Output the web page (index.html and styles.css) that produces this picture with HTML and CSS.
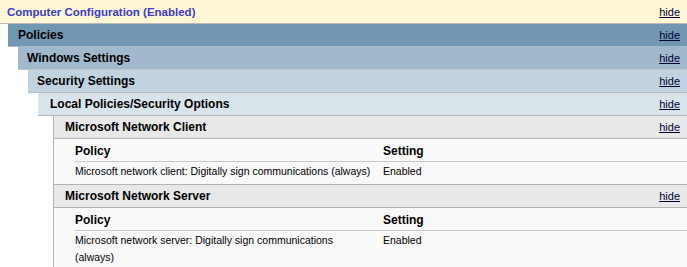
FILE: index.html
```html
<!DOCTYPE html>
<html>
<head>
<meta charset="utf-8">
<title>Group Policy Report</title>
<link rel="stylesheet" href="styles.css">
</head>
<body>
<div class="he0">
	<div class="head"><span class="title">Computer Configuration (Enabled)</span><a href="#">hide</a></div>
	<div class="body b0">
		<div class="head he1"><span class="title">Policies</span><a href="#">hide</a></div>
		<div class="body b1">
			<div class="head he2"><span class="title">Windows Settings</span><a href="#">hide</a></div>
			<div class="body b2">
				<div class="head he3"><span class="title">Security Settings</span><a href="#">hide</a></div>
				<div class="body b3">
					<div class="head he4"><span class="title">Local Policies/Security Options</span><a href="#">hide</a></div>
					<div class="body b4">
						<div class="group">
							<div class="head he5"><span class="title">Microsoft Network Client</span><a href="#">hide</a></div>
							<div class="info">
								<table>
									<tr><th class="pol">Policy</th><th>Setting</th></tr>
									<tr><td class="pol">Microsoft network client: Digitally sign communications (always)</td><td>Enabled</td></tr>
								</table>
							</div>
							<div class="head he5"><span class="title">Microsoft Network Server</span><a href="#">hide</a></div>
							<div class="info">
								<table>
									<tr><th class="pol">Policy</th><th>Setting</th></tr>
									<tr><td class="pol">Microsoft network server: Digitally sign communications (always)</td><td>Enabled</td></tr>
								</table>
							</div>
						</div>
					</div>
				</div>
			</div>
		</div>
	</div>
</div>
</body>
</html>
```

FILE: styles.css
```css
*{margin:0; padding:0;}
body{font-family:"Liberation Sans", Arial, sans-serif; font-size:10.5px; color:#000; background:#fff; overflow:hidden;}

.head{display:flex; align-items:center; justify-content:space-between; height:22px; border-bottom:1px solid #b4b4b4; padding-right:7px;}
.head .title{font-weight:bold; font-size:12px;}
.head a{color:#000033; text-decoration:underline; font-size:11px;}

.he0 > .head{height:23px; background:#fef7d6; padding-left:7px; border-bottom-color:#b9b9b9;}
.he0 > .head .title{color:#3c3cc8; font-size:11.5px;}

.b0{padding-left:8px;}
.he1{background:#7197b3; padding-left:10px; border-bottom-color:#a9b9c6;}
.b1{padding-left:10px;}
.he2{background:#a1b9cc; padding-left:9px; border-bottom-color:#b9c5cf;}
.b2{padding-left:10px;}
.he3{background:#c1d3df; padding-left:9px; border-bottom-color:#b4bcc2;}
.b3{padding-left:10px;}
.he4{background:#d9e3ea; padding-left:12px; border-bottom-color:#b7b7b7;}
.b4{padding-left:15px;}

.group{border-left:1px solid #b4b4b4; background:#f9f9f9;}
.he5{background:#e8e8e8; padding-left:11px;}
.info{padding-left:21px; border-bottom:1px solid #b4b4b4;}
.info:last-child{border-bottom:0;}

table{width:100%; border-collapse:collapse;}
th{text-align:left; font-size:12px; font-weight:bold; height:21px; padding-top:1px; border-bottom:1px solid #c8c8c8;}
td{vertical-align:top; line-height:17px; padding:1px 0 4px;}
.pol{width:299px; padding-right:9px;}
```
